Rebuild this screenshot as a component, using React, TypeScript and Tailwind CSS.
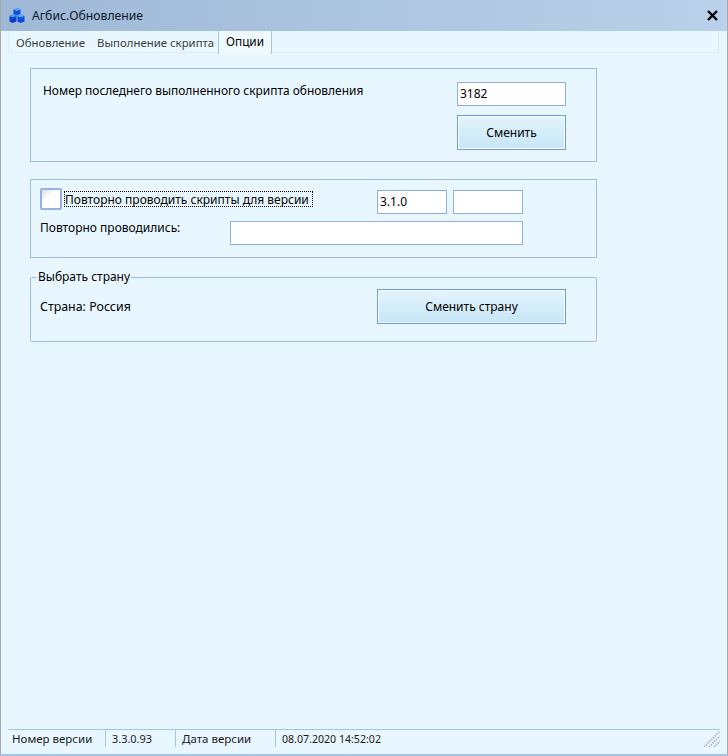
const font = "font-['Noto_Sans','Liberation_Sans',sans-serif]";

const CubesIcon = () => (
  <svg width="16" height="16" viewBox="0 0 16 16">
    <path d="M4.5 1.5 L8.5 0 L11.5 1.5 L11.5 6 L7.5 7.5 L4.5 6 Z" fill="#0a4fe0" />
    <path d="M4.5 1.5 L8.5 0 L11.5 1.5 L7.5 3 Z" fill="#5fa8ff" />
    <path d="M0.5 8 L4.5 6.5 L7.5 8 L7.5 13.5 L3.5 15 L0.5 13.5 Z" fill="#0840c8" />
    <path d="M0.5 8 L4.5 6.5 L7.5 8 L3.5 9.5 Z" fill="#4f9cff" />
    <path d="M8.5 8 L12.5 6.5 L15.5 8 L15.5 13.5 L11.5 15 L8.5 13.5 Z" fill="#0a4fe0" />
    <path d="M8.5 8 L12.5 6.5 L15.5 8 L11.5 9.5 Z" fill="#5fa8ff" />
  </svg>
);

const CloseIcon = () => (
  <svg width="11" height="11" viewBox="0 0 11 11">
    <path d="M1 1 L10 10 M10 1 L1 10" stroke="#000" strokeWidth="2.4" />
  </svg>
);

const Grip = () => (
  <svg width="16" height="16" viewBox="0 0 16 16" className="absolute bottom-[7px] right-[7px]">
    <path d="M0 16 L16 0 M5 16 L16 5 M10 16 L16 10" stroke="#b8bcc0" strokeWidth="2" strokeDasharray="1.5 1" />
  </svg>
);

const Field = ({ value, className }: { value?: string; className: string }) => (
  <div className={`h-[24px] bg-white border border-[#8fb0dc] pl-[2px] text-[12px] leading-[22px] text-black ${className}`}>
    {value}
  </div>
);

const WinButton = ({ label, className }: { label: string; className: string }) => (
  <button className={`border border-[#6b9be0] bg-gradient-to-b from-[#e3f4fd] to-[#c6e6f6] shadow-[inset_0_0_0_1px_#ffffff] text-[12px] text-black ${className}`}>
    {label}
  </button>
);

export default function App() {
  return (
    <div className={`${font} w-[728px] h-[756px] flex flex-col bg-[#e8f7ff] text-[12px] text-black border-l border-r border-[#a8a8a8] border-b-2 border-b-[#a3c4ea] relative overflow-hidden`}>
      <div className="h-[31px] shrink-0 flex items-center bg-gradient-to-r from-[#9fb8d6] to-[#b9d1ea] pl-[8px] pr-[8px]">
        <CubesIcon />
        <span className="ml-[7px] pt-[1px] text-[12.2px] text-[#10182c]">Агбис.Обновление</span>
        <span className="ml-auto mr-[1px] flex">
          <CloseIcon />
        </span>
      </div>

      <div className="h-[22px] shrink-0 ml-[7px] mr-[8px] flex items-stretch border-l border-r border-b border-[#d8ecfa]">
        <span className="pl-[7px] w-[80px] pt-[3px] text-[11.4px] text-[#3c3c3c]">Обновление</span>
        <span className="w-[129px] pl-[8px] pt-[3px] text-[11.4px] text-[#3c3c3c] whitespace-nowrap">Выполнение скрипта</span>
        <span className="h-[23px] w-[54px] text-center pt-[2px] text-[11.8px] border-l border-r border-[#a3c4ea] bg-[#effaff]">Опции</span>
      </div>

      <div className="flex-1 flex flex-col pl-[29px] pt-[15px]">
        <div className="w-[567px] h-[94px] border border-[#9dbbe3] flex justify-between pl-[12px] pr-[30px] pt-[13px]">
          <span className="leading-[17px] text-[11.95px]">Номер последнего выполненного скрипта обновления</span>
          <div className="flex flex-col gap-[9px]">
            <Field value="3182" className="w-[109px]" />
            <WinButton label="Сменить" className="w-[109px] h-[35px]" />
          </div>
        </div>

        <div className="w-[567px] h-[79px] mt-[17px] border border-[#9dbbe3] pl-[9px] pt-[8px] flex flex-col">
          <div className="flex items-start">
            <div className="w-[22px] h-[22px] border-2 border-[#93b3de] rounded-[2px] bg-gradient-to-br from-[#e0e0e0] to-white to-40%" />
            <span className="ml-[2px] mt-[3px] h-[16px] w-[249px] leading-[15px] border border-dotted border-black whitespace-nowrap">
              Повторно проводить скрипты для версии
            </span>
            <Field value="3.1.0" className="w-[70px] ml-[64px] mt-[2px]" />
            <Field className="w-[70px] ml-[6px] mt-[2px]" />
          </div>
          <div className="flex items-start mt-[7px]">
            <span className="w-[190px] leading-[16px] -mt-[1px]">Повторно проводились:</span>
            <Field className="w-[293px]" />
          </div>
        </div>

        <fieldset className="w-[567px] h-[73px] mt-[11px] border border-[#9dbbe3] rounded-[2px] pl-[9px] pr-[30px] flex">
          <legend className="ml-[-3px] px-[1px] leading-[16px] text-[12px]">Выбрать страну</legend>
          <div className="flex w-full items-start justify-between pt-[4px]">
            <span className="mt-[10px] leading-[16px] text-[12.4px]">Страна: Россия</span>
            <WinButton label="Сменить страну" className="w-[189px] h-[35px]" />
          </div>
        </fieldset>
      </div>

      <div className="h-[25px] shrink-0 ml-[7px] mr-[7px] flex relative">
        <div className="absolute top-0 left-0 right-0 h-[1px] bg-[#a3c4ea]" />
        <div className="h-[18px] flex w-full items-center text-[#1a1a1a] text-[11.5px]">
          <span className="w-[98px] pl-[4px] border-r border-[#a3c4ea] leading-[18px] pt-[1px] h-[18px]">Номер версии</span>
          <span className="w-[70px] pl-[6px] border-r border-[#a3c4ea] text-[10.9px] leading-[18px] pt-[1px] h-[18px]">3.3.0.93</span>
          <span className="w-[100px] pl-[6px] border-r border-[#a3c4ea] leading-[18px] pt-[1px] h-[18px]">Дата версии</span>
          <span className="pl-[6px] text-[10.6px] leading-[18px] pt-[1px] h-[18px]">08.07.2020 14:52:02</span>
        </div>
      </div>
      <Grip />
    </div>
  );
}
